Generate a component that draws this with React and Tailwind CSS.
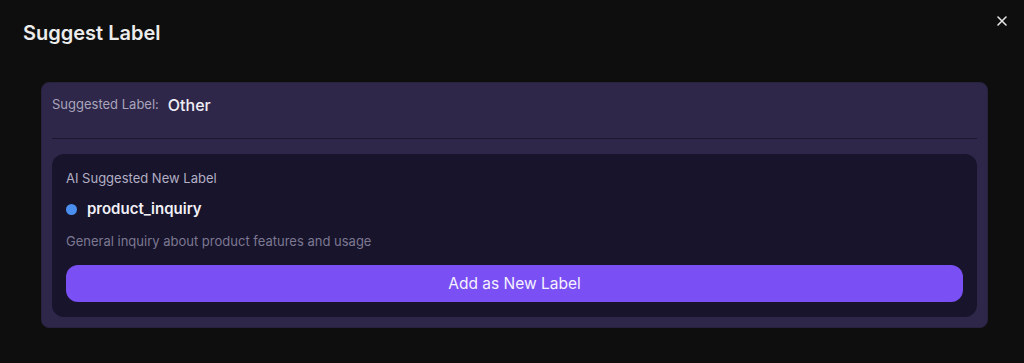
import React from "react";

export default function App() {
  return (
    <div className="relative w-[1024px] h-[363px] bg-[#0e0e0e] font-['Inter',sans-serif] overflow-hidden">
      <div className="flex items-start justify-between pl-[23px] pr-[14px] pt-[20px]">
        <h2 className="text-[20px] leading-[26px] font-semibold text-[#ececec] tracking-[0px]">Suggest Label</h2>
        <button className="mt-[-7px] text-[#e5e5e5]" aria-label="Close">
          <svg width="16" height="16" viewBox="0 0 16 16" fill="none" stroke="currentColor" strokeWidth="1.6" strokeLinecap="round">
            <path d="M4 4l8 8M12 4l-8 8" />
          </svg>
        </button>
      </div>

      <div className="ml-[41px] mt-[36px] w-[947px] rounded-[8px] bg-[#2e2749] border border-[#28223e] px-[10px] pt-[11px] pb-[10px]">
        <div className="flex items-center gap-[9px] h-[22px]">
          <span className="text-[13px] text-[#a9a4bb]">Suggested Label:</span>
          <span className="text-[16px] font-medium text-[#f0eef5]">Other</span>
        </div>
        <div className="mt-[22px] h-px bg-[#1c1830]" />
        <div className="mt-[15px] rounded-[12px] bg-[#17142b] px-[14px] pt-[14px] pb-[15px]">
          <div className="text-[13px] leading-[20px] text-[#b3afc4]">AI Suggested New Label</div>
          <div className="mt-[10px] flex items-center gap-[10px] h-[22px]">
            <span className="w-[11px] h-[11px] rounded-full bg-[#4a8ff0]" />
            <span className="text-[15px] font-semibold text-[#f2f0f7]">product_inquiry</span>
          </div>
          <div className="mt-[11px] text-[13px] leading-[20px] text-[#7d7892]">General inquiry about product features and usage</div>
          <button className="mt-[14px] w-full h-[37px] rounded-[12px] bg-[#7a4ff3] text-[15.5px] text-[#f5f2ff]">Add as New Label</button>
        </div>
      </div>
    </div>
  );
}
